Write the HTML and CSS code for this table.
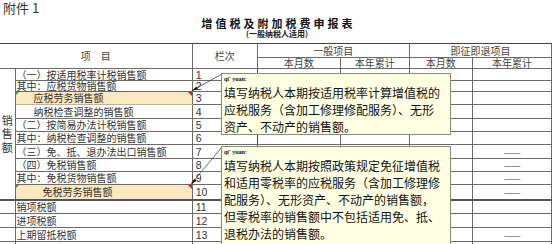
FILE: index.html
```html
<!DOCTYPE html>
<html lang="zh-CN">
<head>
<meta charset="utf-8">
<title>增值税及附加税费申报表</title>
<link rel="stylesheet" href="styles.css">
</head>
<body>
<div class="page">
  <div class="annex">附件 1</div>
  <div class="title">增值税及附加税费申报表</div>
  <div class="subtitle">(一般纳税人适用)</div>
  <table class="form">
    <colgroup>
      <col class="c-cat"><col class="c-item"><col class="c-no">
      <col class="c-m1"><col class="c-y1"><col class="c-m2"><col class="c-y2">
    </colgroup>
    <thead>
      <tr class="h1">
        <th colspan="2" rowspan="2">项　目</th>
        <th rowspan="2">栏次</th>
        <th colspan="2">一般项目</th>
        <th colspan="2">即征即退项目</th>
      </tr>
      <tr class="h2">
        <th>本月数</th><th>本年累计</th><th>本月数</th><th>本年累计</th>
      </tr>
    </thead>
    <tbody>
      <tr class="r12"><td rowspan="10" class="cat">销<br>售<br>额</td><td class="item">（一）按适用税率计税销售额</td><td class="no">1</td><td></td><td></td><td></td><td></td></tr>
      <tr class="r11"><td class="item">其中：应税货物销售额</td><td class="no">2</td><td></td><td></td><td></td><td></td></tr>
      <tr class="r13"><td class="item ind2 hl">应税劳务销售额</td><td class="no">3</td><td></td><td></td><td></td><td></td></tr>
      <tr class="r14"><td class="item ind2">纳税检查调整的销售额</td><td class="no">4</td><td></td><td></td><td></td><td></td></tr>
      <tr class="r13"><td class="item">（二）按简易办法计税销售额</td><td class="no">5</td><td></td><td></td><td></td><td></td></tr>
      <tr class="r13"><td class="item">其中：纳税检查调整的销售额</td><td class="no">6</td><td></td><td></td><td></td><td></td></tr>
      <tr class="r14"><td class="item">（三）免、抵、退办法出口销售额</td><td class="no">7</td><td></td><td></td><td class="dash">——</td><td class="dash">——</td></tr>
      <tr class="r13"><td class="item">（四）免税销售额</td><td class="no">8</td><td></td><td></td><td class="dash">——</td><td class="dash">——</td></tr>
      <tr class="r13"><td class="item">其中：免税货物销售额</td><td class="no">9</td><td></td><td></td><td class="dash">——</td><td class="dash">——</td></tr>
      <tr class="r15"><td class="item ind3 hl">免税劳务销售额</td><td class="no">10</td><td></td><td></td><td class="dash">——</td><td class="dash">——</td></tr>
      <tr class="r14 sect"><td class="cat"></td><td class="item">销项税额</td><td class="no">11</td><td></td><td></td><td></td><td></td></tr>
      <tr class="r14"><td class="cat"></td><td class="item">进项税额</td><td class="no">12</td><td></td><td></td><td></td><td></td></tr>
      <tr class="r14"><td class="cat"></td><td class="item">上期留抵税额</td><td class="no">13</td><td></td><td></td><td></td><td class="dash">——</td></tr>
      <tr class="r14"><td class="cat"></td><td class="item"></td><td class="no"></td><td></td><td></td><td></td><td></td></tr>
    </tbody>
  </table>

  <svg class="leaders" width="554" height="244" viewBox="0 0 554 244" aria-hidden="true">
    <line x1="193" y1="90" x2="222" y2="74"/>
    <polygon points="191.5,91 196.5,86.5 197.5,89.5"/>
    <line x1="192" y1="183" x2="222" y2="147"/>
    <polygon points="190.5,184.5 194.5,178.5 196.5,181"/>
  </svg>

  <div class="note note1">
    <div class="author">qi' yuan:</div>
    <p>填写纳税人本期按适用税率计算增值税的<br>应税服务（含加工修理修配服务）、无形<br>资产、不动产的销售额。</p>
  </div>
  <div class="note note2">
    <div class="author">qi' yuan:</div>
    <p>填写纳税人本期按照政策规定免征增值税<br>和适用零税率的应税服务（含加工修理修<br>配服务）、无形资产、不动产的销售额，<br>但零税率的销售额中不包括适用免、抵、<br>退税办法的销售额。</p>
  </div>
</div>
</body>
</html>
```

FILE: styles.css
```css
html, body {
  margin: 0;
  padding: 0;
  background: #ffffff;
}
body {
  width: 554px;
  height: 244px;
  overflow: hidden;
  font-family: "Noto Sans CJK SC", "Noto Sans", sans-serif;
  color: #333;
}
.page {
  position: relative;
  width: 554px;
  height: 244px;
}
.annex {
  height: 16px;
  line-height: 16px;
  font-size: 13px;
  padding-left: 3px;
  color: #333;
}
.title {
  height: 12px;
  line-height: 12px;
  font-size: 11px;
  font-weight: 700;
  letter-spacing: 3px;
  text-align: center;
  padding-left: 3px;
  margin-top: 1px;
  color: #111;
}
.subtitle {
  height: 10px;
  line-height: 10px;
  font-size: 8px;
  font-weight: 700;
  text-align: center;
  color: #222;
  margin-bottom: 4px;
}
.form {
  border-collapse: collapse;
  table-layout: fixed;
  width: 552px;
  font-size: 10px;
  line-height: 10px;
}
.c-cat { width: 15px; }
.c-item { width: 177px; }
.c-no { width: 65px; }
.c-m1 { width: 83px; }
.c-y1 { width: 69px; }
.c-m2 { width: 63px; }
.c-y2 { width: 79px; }
.form th, .form td {
  border: 1px solid #6a6a6a;
  padding: 0;
  white-space: nowrap;
}
.form th {
  font-weight: 400;
  color: #444;
  text-align: center;
}
.form tr:first-child th { border-top-color: #444; }
.form th:first-child, .form td:first-child { border-left: none; }
.h1 { height: 14px; }
.h2 { height: 10px; }
.r11 { height: 11px; }
.r12 { height: 12px; }
.r13 { height: 13px; }
.r14 { height: 14px; }
.r15 { height: 15px; }
.cat {
  text-align: center;
  font-size: 11px;
  line-height: 13.5px;
  color: #333;
  border-right-color: #444;
}
.item {
  padding-left: 1px !important;
  color: #333;
  position: relative;
}
.ind2 { padding-left: 18px !important; }
.ind3 { padding-left: 27px !important; }
.hl {
  background: #fce7c3;
  border-bottom-color: #c9b08a !important;
}
.hl::before {
  content: "";
  position: absolute;
  left: 0;
  top: 0;
  border-top: 3px solid #3a9a3a;
  border-right: 3px solid transparent;
}
.hl::after {
  content: "";
  position: absolute;
  right: 0;
  top: 0;
  border-top: 4px solid #d42020;
  border-left: 4px solid transparent;
}
.no {
  padding-left: 3px !important;
  font-family: "Liberation Sans", Arial, sans-serif;
  font-size: 10.5px;
  color: #333;
  border-left-color: #444 !important;
  border-right-color: #444 !important;
}
.dash {
  text-align: center;
  color: #777;
  font-size: 10px;
  letter-spacing: -1px;
}
.sect td {
  border-top: 2px solid #555;
}
.leaders {
  position: absolute;
  left: 0;
  top: 0;
  pointer-events: none;
}
.leaders line {
  stroke: #444;
  stroke-width: 0.8;
}
.leaders polygon {
  fill: #111;
}
.note {
  position: absolute;
  left: 221px;
  width: 224px;
  background: #ffffe4;
  border: 1px solid #8a8a7a;
  padding: 0 2px 0 2px;
  color: #111;
}
.note1 { top: 73px; height: 60px; }
.note2 { top: 146px; height: 100px; }
.author {
  height: 9px;
  line-height: 8px;
  padding-top: 1px;
  font-family: "Liberation Serif", serif;
  font-size: 6px;
  font-weight: 700;
  color: #111;
}
.note p {
  margin: 0;
  font-size: 12px;
  line-height: 17px;
  white-space: nowrap;
}
```
